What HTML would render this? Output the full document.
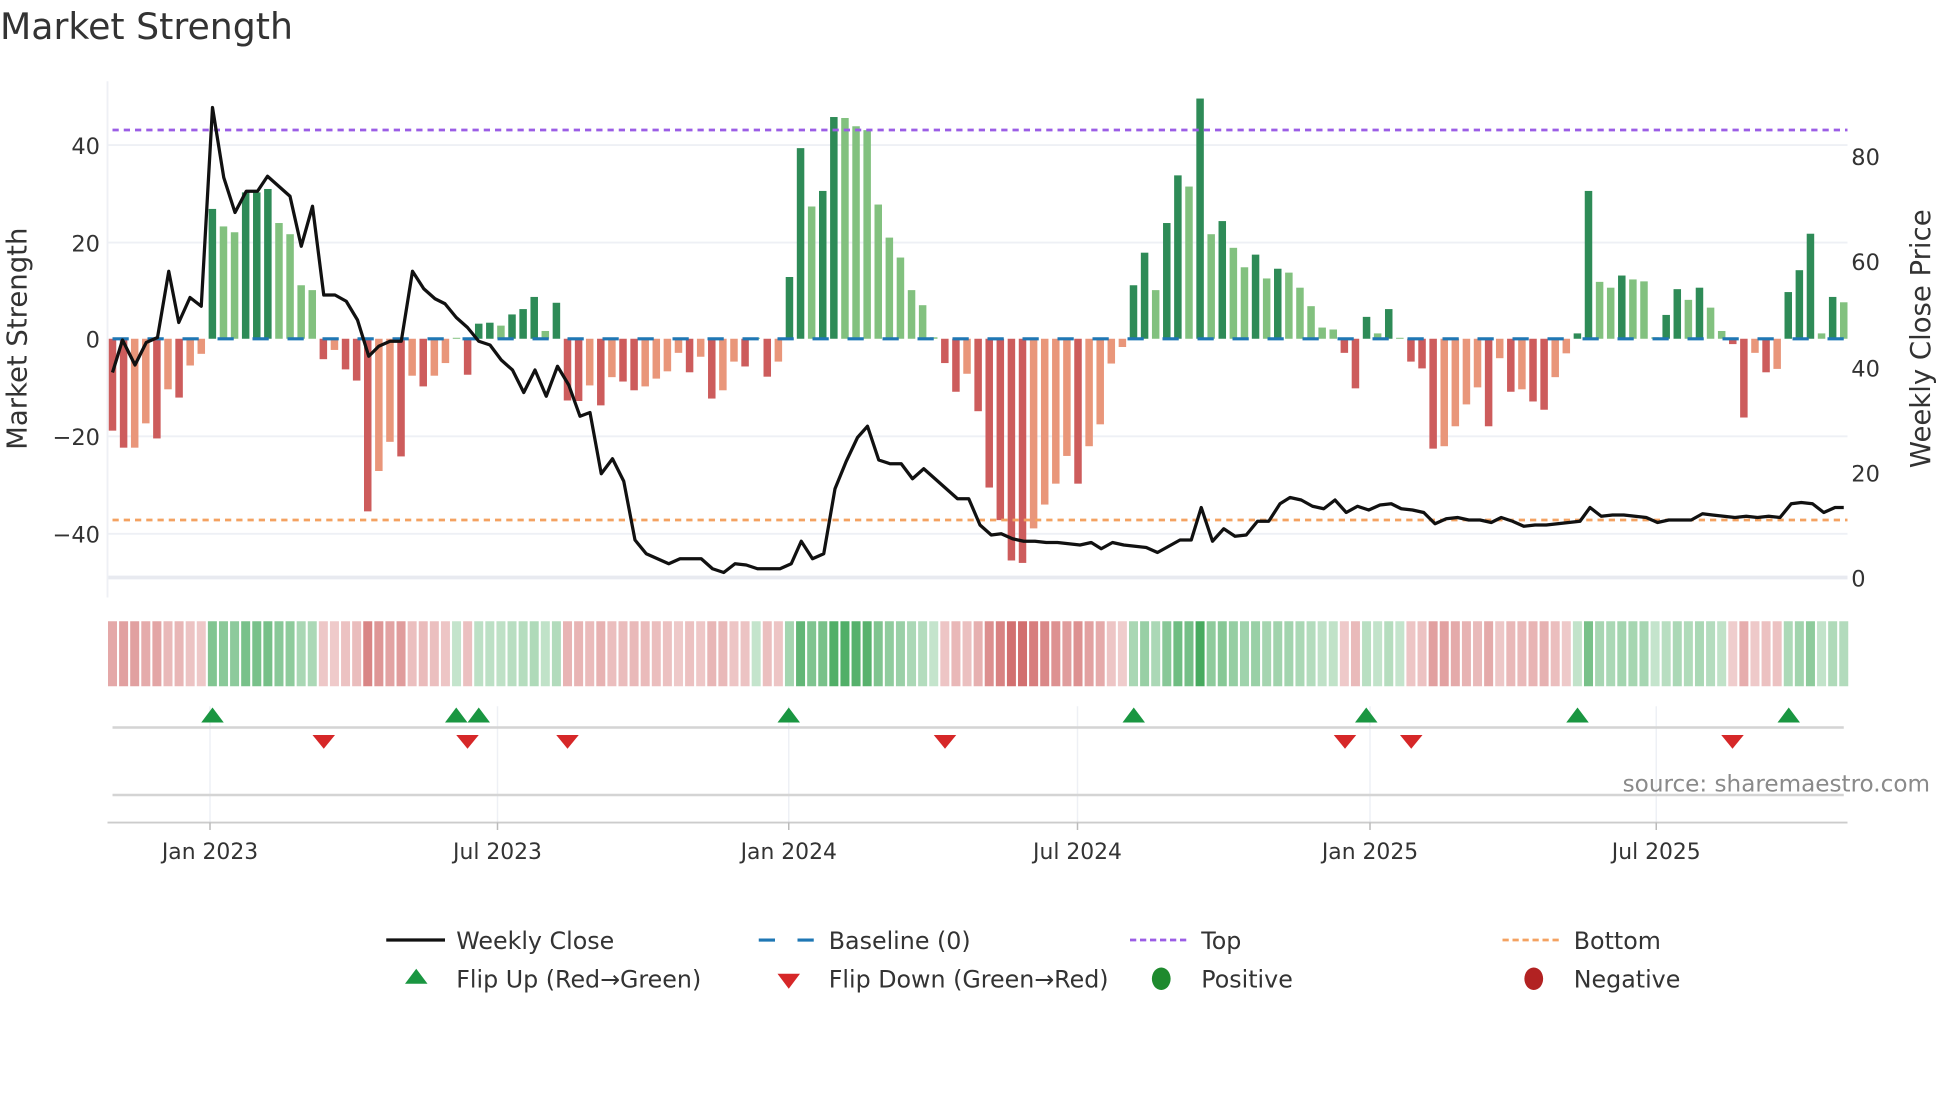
<!DOCTYPE html>
<html><head><meta charset="utf-8"><style>
html,body{margin:0;padding:0;background:#fff;width:1960px;height:1102px;overflow:hidden}
svg{display:block}
text{font-family:"DejaVu Sans","Liberation Sans",sans-serif;fill:#333}
</style></head><body>
<svg id="s" width="1960" height="1102" viewBox="0 0 1568 881.6" xmlns="http://www.w3.org/2000/svg">
<rect width="1568" height="881.6" fill="#fff"/>
<text x="0" y="31" font-size="29">Market Strength</text>
<g stroke="#eef0f5" stroke-width="1.5">
<line x1="86" x2="1478" y1="116" y2="116"/><line x1="86" x2="1478" y1="194" y2="194"/>
<line x1="86" x2="1478" y1="349" y2="349"/><line x1="86" x2="1478" y1="427" y2="427"/>
</g>
<line x1="86" x2="1478" y1="462" y2="462" stroke="#e8eaf0" stroke-width="3"/>
<line x1="86" x2="86" y1="65" y2="478" stroke="#eef0f5" stroke-width="1.5"/>
<g id="bars"></g>
<line x1="90" x2="1478" y1="271" y2="271" stroke="#1f77b4" stroke-width="2.5" stroke-dasharray="13,15"/>
<line x1="90" x2="1478" y1="104" y2="104" stroke="#9b5de5" stroke-width="2.2" stroke-dasharray="5,4"/>
<line x1="90" x2="1478" y1="416" y2="416" stroke="#f4a261" stroke-width="2.2" stroke-dasharray="5,4"/>
<polyline id="price" fill="none" stroke="#111" stroke-width="2.6" stroke-linejoin="round"/>
<g font-size="18" text-anchor="end">
<text x="80" y="123">40</text><text x="80" y="201">20</text><text x="80" y="278">0</text>
<text x="80" y="356">−20</text><text x="80" y="434">−40</text>
</g>
<g font-size="18">
<text x="1481" y="132">80</text><text x="1481" y="216">60</text><text x="1481" y="301">40</text>
<text x="1481" y="385">20</text><text x="1481" y="469">0</text>
</g>
<text transform="translate(21,271) rotate(-90)" font-size="22" text-anchor="middle">Market Strength</text>
<text transform="translate(1544,271) rotate(-90)" font-size="22" text-anchor="middle">Weekly Close Price</text>
<g id="heat"></g>
<g stroke="#eef0f5" stroke-width="1.2">
<line x1="168" x2="168" y1="565" y2="658"/><line x1="398" x2="398" y1="565" y2="658"/>
<line x1="631" x2="631" y1="565" y2="658"/><line x1="862" x2="862" y1="565" y2="658"/>
<line x1="1096" x2="1096" y1="565" y2="658"/><line x1="1325" x2="1325" y1="565" y2="658"/>
</g>
<line x1="90" x2="1475" y1="582" y2="582" stroke="#d4d4d4" stroke-width="2"/>
<line x1="90" x2="1475" y1="636" y2="636" stroke="#d4d4d4" stroke-width="2"/>
<line x1="86" x2="1478" y1="658" y2="658" stroke="#ccc" stroke-width="1.5"/>
<g id="flips"></g>
<text x="1544" y="633" font-size="18.5" text-anchor="end" style="fill:#8a8a8a">source: sharemaestro.com</text>
<g stroke="#bbb" stroke-width="1.2">
<line x1="168" x2="168" y1="658" y2="664"/><line x1="398" x2="398" y1="658" y2="664"/>
<line x1="631" x2="631" y1="658" y2="664"/><line x1="862" x2="862" y1="658" y2="664"/>
<line x1="1096" x2="1096" y1="658" y2="664"/><line x1="1325" x2="1325" y1="658" y2="664"/>
</g>
<g font-size="17.5" text-anchor="middle">
<text x="168" y="687">Jan 2023</text><text x="398" y="687">Jul 2023</text><text x="631" y="687">Jan 2024</text>
<text x="862" y="687">Jul 2024</text><text x="1096" y="687">Jan 2025</text><text x="1325" y="687">Jul 2025</text>
</g>
<line x1="309" x2="356" y1="752" y2="752" stroke="#111" stroke-width="2.6"/>
<line x1="607" x2="652" y1="752" y2="752" stroke="#1f77b4" stroke-width="2.5" stroke-dasharray="13,18"/>
<line x1="904" x2="950" y1="752" y2="752" stroke="#9b5de5" stroke-width="2.2" stroke-dasharray="5,3"/>
<line x1="1202" x2="1248" y1="752" y2="752" stroke="#f4a261" stroke-width="2.2" stroke-dasharray="5,3"/>
<g font-size="19">
<text x="365" y="759">Weekly Close</text><text x="663" y="759">Baseline (0)</text>
<text x="961" y="759">Top</text><text x="1259" y="759">Bottom</text>
<text x="365" y="790">Flip Up (Red→Green)</text><text x="663" y="790">Flip Down (Green→Red)</text>
<text x="961" y="790">Positive</text><text x="1259" y="790">Negative</text>
</g>
<polygon points="324,787 342,787 333,775" fill="#1a9641"/>
<polygon points="622,779 640,779 631,791" fill="#d62728"/>
<ellipse cx="929" cy="783" rx="7.5" ry="9" fill="#1e8a2e"/>
<ellipse cx="1227" cy="783" rx="7.5" ry="9" fill="#b22222"/>
</svg>
<script>
var v="-18.9R -22.4R -22.4L -17.4L -20.5R -10.4L -12.1R -5.5L -3.1L 26.7D 23.1L 21.9L 30.1D 30.1D 30.8D 23.8L 21.5L 11L 10L -4.2R -2.3L -6.3R -8.6R -35.5R -27.2L -21.2L -24.2R -7.6L -9.8R -7.6L -5L 0.2L -7.4R 3.1D 3.3D 2.7L 5D 6.1D 8.6D 1.6L 7.4D -12.7R -12.8R -9.6L -13.7R -7.9L -8.8R -10.6R -9.8L -8.2L -6.7L -2.9L -6.9R -3.7L -12.3R -10.6L -4.7L -5.7R 0.2L -7.8R -4.7L 12.7D 39.2D 27.2L 30.4D 45.6D 45.4L 43.7L 42.9L 27.6L 20.8L 16.7L 10L 6.9L 0.3L -5R -10.9R -7.2L -14.9R -30.6R -37.3R -45.6R -46.1R -39L -34.1L -29.8L -24.1L -29.8R -22.1L -17.6L -5.1L -1.7L 11D 17.7D 10L 23.8D 33.6D 31.3L 49.4D 21.5L 24.2D 18.7L 14.7L 17.3D 12.4L 14.4D 13.6L 10.5L 6.7L 2.3L 1.9L -2.9R -10.2R 4.5D 1.1L 6.1D 0.2L -4.7R -6.1R -22.6R -22.1L -18L -13.5L -10L -18R -4L -10.9R -10.4L -12.9R -14.6R -7.9L -3L 1.1D 30.4D 11.7L 10.5L 13D 12.2L 11.8L 0.3L 4.9D 10.2D 8L 10.5D 6.4L 1.6L -1.1R -16.2R -2.9L -6.9R -6.2L 9.6D 14.1D 21.6D 1.1L 8.6D 7.5L".split(" ");
var ns="http://www.w3.org/2000/svg",B=document.getElementById("bars"),H=document.getElementById("heat");
var n=v.length,x0=90,p=(1475-90)/(n-1);
var col={D:"#2e8b57",L:"#82c17f",R:"#cd5c5c"};
function mk(t,a,par){var e=document.createElementNS(ns,t);for(var k in a)e.setAttribute(k,a[k]);par.appendChild(e);return e;}
for(var i=0;i<n;i++){var s=v[i],c=s.slice(-1),val=parseFloat(s),x=x0+i*p,y0=271,y1=271-3.89*val;
 var fill=val>=0?col[c]:(c=="R"?"#cd5c5c":"#e9967a");
 mk("rect",{x:x-3,y:Math.min(y0,y1),width:6,height:Math.max(Math.abs(y1-y0),0.8),fill:fill},B);
 var a=0.3+0.65*Math.min(Math.abs(val),50)/50;
 var hc=val>=0?"rgba(60,165,85,"+a+")":"rgba(205,95,95,"+a+")";
 mk("rect",{x:x-3.6,y:497,width:7.2,height:52,fill:hc},H);}
var pts="90,298 98,272 108,292 117,274 126,270 135,217 143,258 152,238 161,245 170,86 179,142 188,170 197,153 206,153 214,141 223,149 232,157 241,197 250,165 259,236 268,236 277,241 286,256 295,285 303,277 312,273 321,273 330,217 339,231 348,239 356,243 365,254 374,262 383,273 392,276 401,288 410,296 419,314 428,296 437,317 446,293 455,308 464,333 472,330 481,379 490,367 499,385 508,432 517,443 526,447 535,451 544,447 552,447 561,447 570,455 579,458 588,451 597,452 606,455 615,455 624,455 633,451 641,433 650,447 659,443 668,391 677,369 686,350 694,341 703,368 712,371 721,371 730,383 739,375 748,383 757,391 766,399 775,399 784,420 793,428 801,427 810,431 819,433 828,433 837,434 846,434 855,435 864,436 873,434 881,439 890,434 899,436 908,437 917,438 926,442 935,437 944,432 953,432 961,406 970,433 979,423 988,429 997,428 1006,417 1015,417 1024,403 1032,398 1041,400 1050,405 1059,407 1068,400 1077,410 1086,405 1095,408 1104,404 1113,403 1121,407 1130,408 1139,410 1148,419 1157,415 1166,414 1175,416 1184,416 1193,418 1201,414 1210,417 1219,421 1228,420 1237,420 1246,419 1255,418 1264,417 1272,406 1281,413 1290,412 1299,412 1308,413 1317,414 1326,418 1335,416 1344,416 1353,416 1362,411 1370,412 1379,413 1388,414 1397,413 1406,414 1415,413 1424,414 1433,403 1441,402 1450,403 1459,410 1468,406 1475,406";
document.getElementById("price").setAttribute("points",pts);
var F=document.getElementById("flips");
[170,365,383,631,907,1093,1262,1431].forEach(function(x){mk("polygon",{points:(x-9)+",578 "+(x+9)+",578 "+x+",566",fill:"#1a9641"},F);});
[259,374,454,756,1076,1129,1386].forEach(function(x){mk("polygon",{points:(x-9)+",588 "+(x+9)+",588 "+x+",599",fill:"#d62728"},F);});
</script>
</body></html>
